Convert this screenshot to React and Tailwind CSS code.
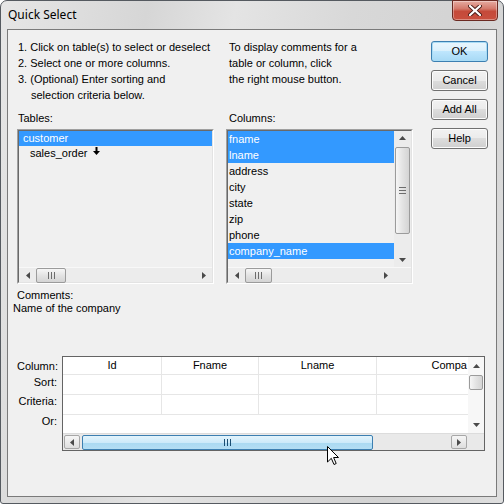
import React from "react";

// Small solid triangle used for scrollbar arrows
function Arrow({ dir, className = "" }) {
  const pts = {
    left: "4,0 4,7 0,3.5",
    right: "0,0 0,7 4,3.5",
    up: "0,4 7,4 3.5,0",
    down: "0,0 7,0 3.5,4",
  }[dir];
  const vert = dir === "up" || dir === "down";
  return (
    <svg
      width={vert ? 7 : 4}
      height={vert ? 4 : 7}
      viewBox={vert ? "0 0 7 4" : "0 0 4 7"}
      className={className}
    >
      <polygon points={pts} fill="#4a4a4a" />
    </svg>
  );
}

// Three-line grip drawn on scrollbar thumbs
function Grip({ vertical = false, color = "#6d6d6d" }) {
  return vertical ? (
    <svg width="7" height="7" viewBox="0 0 7 7">
      <rect x="0" y="0" width="7" height="1" fill={color} />
      <rect x="0" y="3" width="7" height="1" fill={color} />
      <rect x="0" y="6" width="7" height="1" fill={color} />
    </svg>
  ) : (
    <svg width="7" height="7" viewBox="0 0 7 7">
      <rect x="0" y="0" width="1" height="7" fill={color} />
      <rect x="3" y="0" width="1" height="7" fill={color} />
      <rect x="6" y="0" width="1" height="7" fill={color} />
    </svg>
  );
}

function HScroll({ thumbW = 30 }) {
  return (
    <div className="flex items-center h-[15px] bg-[#ececec] border-t border-[#f8f8f8]">
      <div className="w-[17px] flex justify-center">
        <Arrow dir="left" />
      </div>
      <div className="h-[15px] rounded-[2px] border border-[#9b9b9b] bg-[linear-gradient(#f6f6f6,#e3e3e3_50%,#d4d4d4)] flex items-center justify-center" style={{ width: thumbW }}>
        <Grip />
      </div>
      <div className="flex-1" />
      <div className="w-[17px] flex justify-center">
        <Arrow dir="right" />
      </div>
    </div>
  );
}

function Btn({ children, focused = false }) {
  return (
    <div
      className={
        "h-[21px] w-[57px] rounded-[3px] border flex items-center justify-center text-[11px] " +
        (focused
          ? "border-[#3c7fb1] shadow-[inset_0_0_0_1px_#a9dcf5] bg-[linear-gradient(#eaf6fd_0%,#d9f0fc_50%,#bee6fd_50%,#a7d9f5_100%)]"
          : "border-[#707070] shadow-[inset_0_0_0_1px_#fcfcfc] bg-[linear-gradient(#f2f2f2_0%,#ebebeb_50%,#dddddd_50%,#cfcfcf_100%)]")
      }
    >
      {children}
    </div>
  );
}

export default function App() {
  const columns = [
    { name: "fname", sel: true },
    { name: "lname", sel: true },
    { name: "address" },
    { name: "city" },
    { name: "state" },
    { name: "zip" },
    { name: "phone" },
    { name: "company_name", sel: true },
  ];

  return (
    <div className="relative w-[504px] h-[504px] overflow-hidden bg-white font-['Liberation_Sans',Arial,sans-serif] text-[11px] text-black">
      {/* window frame */}
      <div className="flex flex-col w-full h-full rounded-t-[7px] rounded-b-[3px] border border-[#555a60] bg-[linear-gradient(100deg,#e6e6e6_0%,#d6d6d6_25%,#e4e4e4_40%,#d8d8d8_60%,#d3d3d3_80%,#dedede_100%)]">
        {/* title bar */}
        <div className="relative h-[28px] shrink-0">
          <div className="absolute left-[7px] top-[6px] text-[12px] leading-[16px] font-['Noto_Sans',sans-serif] text-black">
            Quick Select
          </div>
          <div className="absolute right-[5px] top-[-1px] w-[46px] h-[21px] rounded-b-[4px] border border-[#6b2a22] bg-[linear-gradient(#e6aba1_0%,#d47a6c_40%,#c54a3a_55%,#c94f3e_100%)] shadow-[inset_0_0_0_1px_rgba(255,255,255,0.35)] flex items-center justify-center">
            <svg width="14" height="11" viewBox="0 0 14 11">
              <path d="M2 1 L7 5.5 L12 1 M2 10 L7 5.5 L12 10" stroke="#4a1d18" strokeWidth="4" strokeLinecap="round" fill="none" />
              <path d="M2 1 L7 5.5 L12 1 M2 10 L7 5.5 L12 10" stroke="#ffffff" strokeWidth="2.2" strokeLinecap="round" fill="none" />
            </svg>
          </div>
        </div>

        {/* client area */}
        <div className="ml-[6px] w-[490px] h-[468px] border border-[#7a7a7a] bg-[#f0f0f0] pl-[9px] pt-[8px] flex flex-col">
          <div className="flex">
            {/* tables column */}
            <div className="w-[197px] flex flex-col">
              <div className="h-[71px] pt-[1px] pl-[1px] leading-[16px]">
                <div>1. Click on table(s) to select or deselect</div>
                <div>2. Select one or more columns.</div>
                <div>3. (Optional) Enter sorting and</div>
                <div className="pl-[13px]">selection criteria below.</div>
              </div>
              <div className="h-[20px] pt-[1px] pl-[1px] leading-[16px]">Tables:</div>
              <div className="h-[155px] border border-[#a0a0a0] border-r-white border-b-white">
                <div className="h-full border border-[#696969] border-r-[#e3e3e3] border-b-[#e3e3e3] flex flex-col">
                  <div className="flex-1">
                    <div className="h-[15px] leading-[15px] bg-[#3399ff] text-white pl-[4px]">customer</div>
                    <div className="relative h-[15px] leading-[15px] pl-[11px]">
                      sales_order
                      <svg className="absolute left-[74px] top-[1px]" width="7" height="8" viewBox="0 0 7 8">
                        <rect x="2.5" y="0" width="2" height="5" fill="#000" />
                        <polygon points="0,4 7,4 3.5,8" fill="#000" />
                      </svg>
                    </div>
                  </div>
                  <HScroll thumbW={30} />
                </div>
              </div>
            </div>

            {/* columns column */}
            <div className="ml-[12px] w-[187px] flex flex-col">
              <div className="h-[71px] pt-[1px] pl-[3px] leading-[16px]">
                <div>To display comments for a</div>
                <div>table or column, click</div>
                <div>the right mouse button.</div>
              </div>
              <div className="h-[20px] pt-[1px] pl-[3px] leading-[16px]">Columns:</div>
              <div className="h-[155px] border border-[#a0a0a0] border-r-white border-b-white">
                <div className="h-full border border-[#696969] border-r-[#e3e3e3] border-b-[#e3e3e3] flex flex-col">
                  <div className="flex flex-1">
                    <div className="flex-1">
                      {columns.map((c) => (
                        <div
                          key={c.name}
                          className={
                            "h-[16px] leading-[16px] pl-[1px] " +
                            (c.sel ? "bg-[#3399ff] text-white" : "")
                          }
                        >
                          {c.name}
                        </div>
                      ))}
                    </div>
                    {/* vertical scrollbar */}
                    <div className="w-[17px] bg-[#ececec] flex flex-col items-center">
                      <div className="h-[14px] flex items-center"><Arrow dir="up" /></div>
                      <div className="mt-[2px] w-[15px] h-[87px] rounded-[2px] border border-[#9b9b9b] bg-[linear-gradient(90deg,#f6f6f6,#e3e3e3_50%,#d4d4d4)] flex items-center justify-center">
                        <Grip vertical />
                      </div>
                      <div className="flex-1" />
                      <div className="h-[14px] flex items-center"><Arrow dir="down" /></div>
                    </div>
                  </div>
                  <div className="flex">
                    <div className="flex-1"><HScroll thumbW={27} /></div>
                    <div className="w-[17px] bg-[#ececec] border-t border-[#f8f8f8]" />
                  </div>
                </div>
              </div>
            </div>

            {/* buttons */}
            <div className="ml-[18px] mt-[3px] flex flex-col gap-[8px]">
              <Btn focused>OK</Btn>
              <Btn>Cancel</Btn>
              <Btn>Add All</Btn>
              <Btn>Help</Btn>
            </div>
          </div>

          {/* comments */}
          <div className="mt-[5px] leading-[13px]">
            <div>Comments:</div>
            <div className="-ml-[4px]">Name of the company</div>
          </div>

          {/* sort / criteria grid */}
          <div className="mt-[41px] flex">
            <div className="w-[40px] text-right leading-[16px]">
              <div className="pt-[2px] h-[18px]">Column:</div>
              <div className="h-[17px] pt-[0px]">Sort:</div>
              <div className="h-[20px] pt-[2px]">Criteria:</div>
              <div className="h-[20px] pt-[2px]">Or:</div>
            </div>
            <div className="ml-[5px] w-[423px] h-[95px] border border-[#646464] bg-white flex flex-col">
              <div className="flex flex-1 min-h-0">
                <div className="flex-1 overflow-hidden">
                  <div className="flex h-[18px] leading-[17px] border-b border-[#e6e6e6]">
                    <div className="w-[99px] text-center border-r border-[#e6e6e6]">Id</div>
                    <div className="w-[97px] text-center border-r border-[#e6e6e6]">Fname</div>
                    <div className="w-[118px] text-center border-r border-[#e6e6e6]">Lname</div>
                    <div className="flex-1 text-right pr-[1px]">Compa</div>
                  </div>
                  {[0, 1].map((r) => (
                    <div key={r} className="flex h-[20px] border-b border-[#e6e6e6]">
                      <div className="w-[99px] border-r border-[#e6e6e6]" />
                      <div className="w-[97px] border-r border-[#e6e6e6]" />
                      <div className="w-[118px] border-r border-[#e6e6e6]" />
                      <div className="flex-1" />
                    </div>
                  ))}
                </div>
                {/* vertical scrollbar */}
                <div className="w-[16px] bg-[#f7f7f7] flex flex-col items-center">
                  <div className="h-[18px] flex items-center"><Arrow dir="up" /></div>
                  <div className="w-[14px] h-[15px] rounded-[2px] border border-[#9b9b9b] bg-[linear-gradient(90deg,#f6f6f6,#e3e3e3_50%,#d4d4d4)]" />
                  <div className="flex-1" />
                  <div className="h-[16px] flex items-center"><Arrow dir="down" /></div>
                </div>
              </div>
              {/* horizontal scrollbar */}
              <div className="h-[17px] bg-[#e9e9e9] border-t border-[#dcdcdc] flex items-center pl-[1px]">
                <div className="w-[16px] h-[14px] rounded-[2px] border border-[#a7a7a7] bg-[linear-gradient(#f6f6f6,#dedede)] flex items-center justify-center">
                  <Arrow dir="left" />
                </div>
                <div className="ml-[2px] w-[291px] h-[15px] rounded-[2px] border border-[#3c7fb1] bg-[linear-gradient(#e3f4fc_0%,#cdeafa_50%,#a9d9f2_50%,#b4def4_100%)] flex items-center justify-center">
                  <Grip color="#1b4e73" />
                </div>
                <div className="flex-1" />
                <div className="w-[16px] h-[14px] rounded-[2px] border border-[#a7a7a7] bg-[linear-gradient(#f6f6f6,#dedede)] flex items-center justify-center">
                  <Arrow dir="right" />
                </div>
                <div className="w-[17px]" />
              </div>
            </div>
          </div>
        </div>
      </div>

      {/* mouse pointer */}
      <svg className="absolute left-[327px] top-[446px]" width="13" height="20" viewBox="0 0 13 20">
        <path d="M0.5 0.5 L0.5 16 L4.3 12.3 L7 18.5 L9.2 17.5 L6.6 11.5 L11.5 11.5 Z" fill="#fff" stroke="#000" strokeWidth="1" strokeLinejoin="miter" />
      </svg>
    </div>
  );
}
